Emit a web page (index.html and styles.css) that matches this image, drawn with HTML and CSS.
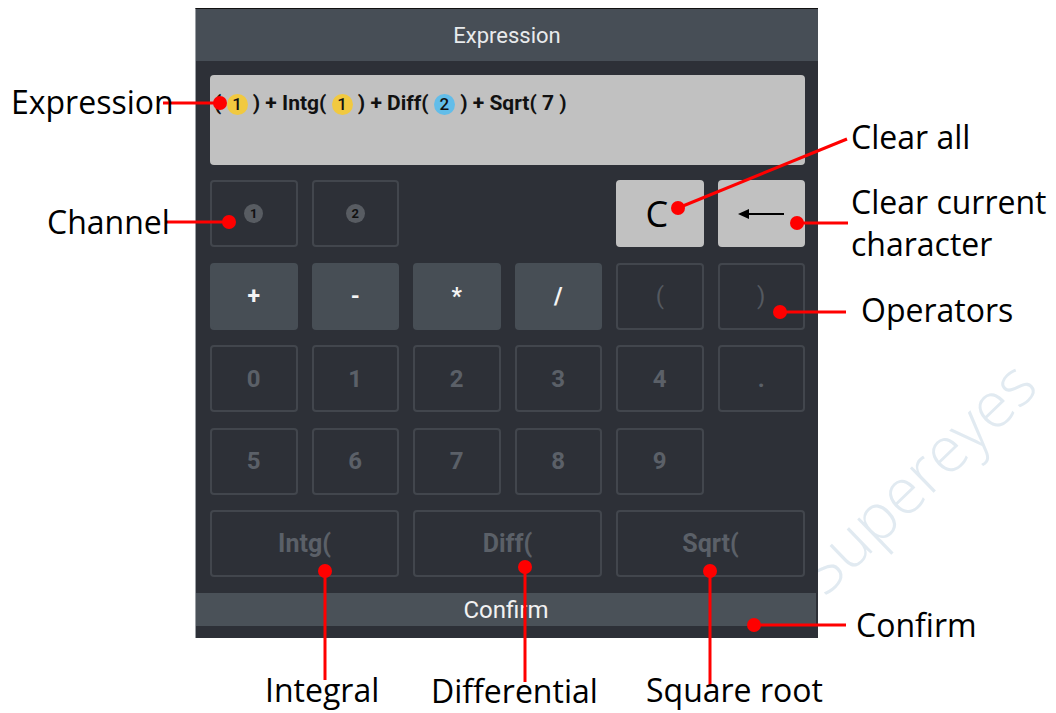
FILE: index.html
```html
<!DOCTYPE html>
<html lang="en">
<head>
    <meta charset="UTF-8">
    <meta name="viewport" content="width=device-width, initial-scale=1.0">
    <title>Expression keypad</title>
    <link rel="stylesheet" href="styles.css">
</head>
<body>
<div class="stage">
    <!-- faint watermark behind everything -->
    <span class="watermark">Supereyes</span>

    <div class="panel">
        <div class="panel-title">Expression</div>
        <div class="panel-body">
            <div class="expr">
                ( <span class="ch ch1">1</span> ) + Intg( <span class="ch ch1">1</span> ) + Diff( <span class="ch ch2">2</span> ) + Sqrt( 7 )
            </div>

            <div class="keys">
                <button class="key chan"><span class="chan-dot">1</span></button>
                <button class="key chan"><span class="chan-dot">2</span></button>
                <div class="key-space"></div>
                <button class="key light clear">C</button>
                <button class="key light back">
                    <svg width="48" height="12" viewBox="0 0 48 12"><path d="M47 6H8" fill="none" stroke="#000" stroke-width="2.2"/><path d="M1 6l11-5v10z" fill="#000"/></svg>
                </button>

                <button class="key op">+</button>
                <button class="key op">-</button>
                <button class="key op">*</button>
                <button class="key op">/</button>
                <button class="key paren">(</button>
                <button class="key paren">)</button>

                <button class="key">0</button>
                <button class="key">1</button>
                <button class="key">2</button>
                <button class="key">3</button>
                <button class="key">4</button>
                <button class="key">.</button>

                <button class="key">5</button>
                <button class="key">6</button>
                <button class="key">7</button>
                <button class="key">8</button>
                <button class="key">9</button>

                <button class="key wide">Intg(</button>
                <button class="key wide">Diff(</button>
                <button class="key wide">Sqrt(</button>
            </div>
        </div>
        <div class="confirm">Confirm</div>
    </div>

    <!-- red callouts -->
    <svg class="callouts" width="1056" height="713" viewBox="0 0 1056 713">
        <g stroke="#ff0000" stroke-width="3" fill="none">
            <path d="M163 103H220"/>
            <path d="M165 222H229"/>
            <path d="M678 208L847 139"/>
            <path d="M797 223H848"/>
            <path d="M780 312H846"/>
            <path d="M754 625H846"/>
            <path d="M325 571V680"/>
            <path d="M525 567V682"/>
            <path d="M710 571V686"/>
        </g>
        <g fill="#ff0000">
            <circle cx="220" cy="103" r="7"/>
            <circle cx="229" cy="222" r="7"/>
            <circle cx="678" cy="208" r="7"/>
            <circle cx="797" cy="223" r="7"/>
            <circle cx="780" cy="312" r="7"/>
            <circle cx="754" cy="625" r="7"/>
            <circle cx="325" cy="571" r="7"/>
            <circle cx="525" cy="567" r="7"/>
            <circle cx="710" cy="571" r="7"/>
        </g>
    </svg>

    <span class="label lb-expression">Expression</span>
    <span class="label lb-channel">Channel</span>
    <span class="label lb-clearall">Clear all</span>
    <span class="label lb-clearcur">Clear current<br>character</span>
    <span class="label lb-operators">Operators</span>
    <span class="label lb-confirm">Confirm</span>
    <span class="label lb-bottom lb-integral">Integral</span>
    <span class="label lb-bottom lb-diff">Differential</span>
    <span class="label lb-bottom lb-sqrt">Square root</span>
</div>
</body>
</html>
```

FILE: styles.css
```css
body {
    margin: 0;
    background: #fff;
    font-family: Roboto, 'Liberation Sans', sans-serif;
}
.stage {
    position: relative;
    width: 1056px;
    height: 713px;
    overflow: hidden;
    box-sizing: border-box;
    padding: 8px 0 0 195px;
}

/* watermark */
.watermark {
    position: absolute;
    left: 830px;
    top: 540px;
    height: 64px;
    transform: rotate(-44deg);
    transform-origin: 0 100%;
    color: #e1eaf1;
    font-family: 'Open Sans', sans-serif;
    font-weight: 300;
    font-size: 64px;
    line-height: 64px;
    white-space: nowrap;
}

/* device panel */
.panel {
    position: relative;
    width: 623px;
    height: 630px;
    box-sizing: border-box;
    background: #2d3037;
    border-top: 1px solid #111;
    border-left: 1px solid #9a9ea3;
    padding-bottom: 12px;
    display: flex;
    flex-direction: column;
}
.panel-title {
    height: 52px;
    background: #474e56;
    color: #e8eaec;
    font-size: 22px;
    line-height: 54px;
    text-align: center;
}
.panel-body {
    padding: 14px 13px 0 14px;
}
.expr {
    height: 90px;
    box-sizing: border-box;
    background: #c1c1c1;
    border-radius: 4px;
    padding: 16px 0 0 4px;
    color: #111;
    font-weight: 700;
    font-size: 21px;
    line-height: 24px;
    white-space: nowrap;
}
.ch {
    display: inline-block;
    width: 21px;
    height: 21px;
    border-radius: 50%;
    text-align: center;
    line-height: 21px;
    font-size: 17px;
    font-weight: 500;
}
.ch1 { background: #f1c940; }
.ch2 { background: #62bde9; }

.keys {
    margin-top: 15px;
    display: grid;
    grid-template-columns: repeat(6, 1fr);
    grid-auto-rows: 67px;
    column-gap: 14px;
    row-gap: 15.5px;
}
.key {
    margin: 0;
    padding: 0;
    box-sizing: border-box;
    border: 2px solid #42464d;
    border-radius: 4px;
    background: #2d3037;
    color: #5b6068;
    font-family: Roboto, sans-serif;
    font-weight: 700;
    font-size: 24px;
    display: flex;
    align-items: center;
    justify-content: center;
}
.key-space {
    grid-column: span 2;
}
.chan-dot {
    width: 19px;
    height: 19px;
    border-radius: 50%;
    background: #585c62;
    color: #111;
    font-size: 13px;
    line-height: 19px;
    text-align: center;
}
.light {
    background: #c1c1c1;
    border-color: #c1c1c1;
    color: #000;
}
.clear {
    font-family: 'Open Sans', sans-serif;
    font-weight: 400;
    font-size: 36px;
    padding-right: 6px;
}
.back svg {
    margin-top: 1px;
}
.op {
    background: #474e55;
    border-color: #474e55;
    color: #f4f4f4;
    font-size: 23px;
}
.paren {
    font-weight: 400;
    font-size: 24px;
    color: #545960;
}
.wide {
    grid-column: span 2;
    font-size: 25px;
}
.confirm {
    margin: 16px 2px 0 0;
    height: 33px;
    background: #4a5158;
    color: #f2f2f2;
    font-size: 24px;
    line-height: 34px;
    text-align: center;
}

/* annotations */
.callouts {
    position: absolute;
    left: 0;
    top: 0;
}
.label {
    position: absolute;
    font-family: 'Open Sans', 'Liberation Sans', sans-serif;
    font-size: 32px;
    line-height: 42px;
    color: #000;
    white-space: nowrap;
}
.lb-bottom {
    line-height: 30px;
}
.lb-expression { left: 11px; top: 81px; }
.lb-channel { left: 47px; top: 201px; }
.lb-clearall { left: 851px; top: 116px; }
.lb-clearcur { left: 851px; top: 181px; }
.lb-operators { left: 861px; top: 289px; }
.lb-confirm { left: 856px; top: 604px; }
.lb-integral { left: 265px; top: 675px; }
.lb-diff { left: 431px; top: 676px; }
.lb-sqrt { left: 646px; top: 675px; }
```
